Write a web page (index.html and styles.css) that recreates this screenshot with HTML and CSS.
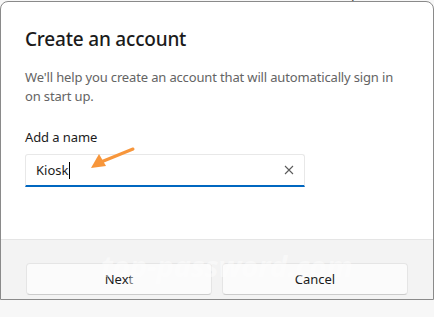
FILE: index.html
```html
<!DOCTYPE html>
<html>
<head>
  <meta charset="UTF-8">
  <title>Create an account</title>
  <link rel="stylesheet" href="styles.css">
</head>
<body>
  <div class="behind">Set up a kiosk</div>
  <div class="dialog">
    <div class="content">
      <h1>Create an account</h1>
      <p class="desc">We'll help you create an account that will automatically sign in on start up.</p>
      <label class="field-label" for="name">Add a name</label>
      <div class="input-box">
        <span class="value">Kiosk</span><span class="caret"></span>
        <span class="clear">
          <svg width="10" height="10" viewBox="0 0 10 10"><path d="M1 1 L9 9 M9 1 L1 9" stroke="#5c5c5c" stroke-width="1.1" fill="none"/></svg>
        </span>
      </div>
      <svg class="arrow" width="48" height="26" viewBox="0 0 48 26">
        <path d="M44 3 L12 16" stroke="#f7963b" stroke-width="3" stroke-linecap="round" fill="none"/>
        <path d="M2 22 L10 8 L17 20 Z" fill="#f7963b"/>
      </svg>
    </div>
    <div class="footer">
      <button class="btn">Next</button>
      <button class="btn">Cancel</button>
      <div class="watermark">top-password.com</div>
    </div>
  </div>
</body>
</html>
```

FILE: styles.css
```css
body {
  margin: 0;
  width: 434px;
  height: 317px;
  background-color: #f7f7f7;
  font-family: "Noto Sans", "Open Sans", sans-serif;
  position: relative;
  overflow: hidden;
}

.behind {
  position: absolute;
  top: -15px;
  left: 318px;
  font-size: 14px;
  color: #444444;
}

.dialog {
  position: relative;
  width: 432px;
  height: 297px;
  margin-top: 1px;
  background-color: #ffffff;
  border: 1px solid #8a8a8a;
  border-radius: 8px 8px 0 0;
  display: flex;
  flex-direction: column;
  overflow: hidden;
}

.content {
  position: relative;
  flex: 1;
  padding: 23px 24px 0 24px;
}

h1 {
  margin: 0;
  font-size: 19px;
  font-weight: 500;
  letter-spacing: -0.2px;
  color: #1b1b1b;
  line-height: 28px;
}

.desc {
  margin: 15px 0 0 0;
  font-size: 13px;
  letter-spacing: -0.15px;
  line-height: 19px;
  color: #646464;
}

.field-label {
  display: block;
  margin-top: 21px;
  font-size: 13px;
  letter-spacing: -0.1px;
  line-height: 20px;
  color: #1b1b1b;
}

.input-box {
  margin-top: 7px;
  height: 30px;
  width: 268px;
  border: 1px solid #e8e8e8;
  border-bottom: 2px solid #0067c0;
  border-radius: 3px 3px 0 0;
  display: flex;
  align-items: center;
  padding-left: 10px;
  position: relative;
}

.value {
  font-size: 13px;
  color: #1b1b1b;
}

.caret {
  width: 1px;
  height: 17px;
  background-color: #000000;
  margin-left: 1px;
}

.clear {
  margin-left: auto;
  margin-right: 10px;
  display: flex;
}

.arrow {
  position: absolute;
  left: 88px;
  top: 144px;
}

.footer {
  position: relative;
  height: 60px;
  background-color: #f3f3f3;
  border-top: 1px solid #e5e5e5;
  display: flex;
  gap: 10px;
  padding: 23px 24px 0 25px;
  box-sizing: border-box;
}

.watermark {
  position: absolute;
  left: 100px;
  top: 6px;
  font-size: 29px;
  font-style: italic;
  font-weight: 700;
  color: rgba(255, 255, 255, 0.45);
  pointer-events: none;
}

.btn {
  width: 186px;
  height: 32px;
  background-color: #fbfbfb;
  border: 1px solid #e5e5e5;
  border-bottom-color: #cccccc;
  border-radius: 4px;
  font-family: "Noto Sans", "Open Sans", sans-serif;
  font-size: 13px;
  color: #1b1b1b;
  padding: 0;
}
```
